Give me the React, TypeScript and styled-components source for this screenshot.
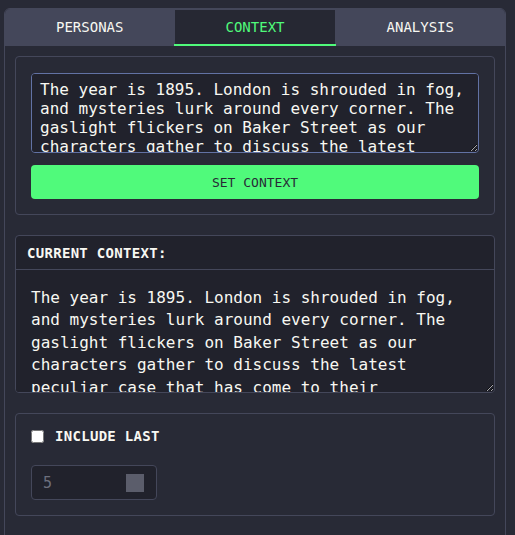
import React from 'react'
import styled, { createGlobalStyle } from 'styled-components'

const CONTEXT_TEXT =
  'The year is 1895. London is shrouded in fog, and mysteries lurk around every corner. The gaslight flickers on Baker Street as our characters gather to discuss the latest peculiar case that has come to their attention.'

const TABS = ['PERSONAS', 'CONTEXT', 'ANALYSIS']

const GlobalStyle = createGlobalStyle`
  html, body {
    margin: 0;
    background: #282a36;
    font-family: 'DejaVu Sans Mono', monospace;
    color: #f8f8f2;
  }
  * {
    box-sizing: border-box;
  }
`

const App: React.FC = () => {
  const [active, setActive] = React.useState('CONTEXT')
  const [draft, setDraft] = React.useState(CONTEXT_TEXT)
  const [context, setContext] = React.useState(CONTEXT_TEXT)
  const [includeLast, setIncludeLast] = React.useState(false)

  return (
    <>
      <GlobalStyle />
      <Page>
        <Panel>
          <TabBar>
            {TABS.map((tab) => (
              <Tab key={tab} $active={tab === active} onClick={() => setActive(tab)}>
                {tab}
              </Tab>
            ))}
          </TabBar>

          <Body>
            <Section>
              <ContextInput value={draft} onChange={(e) => setDraft(e.target.value)} />
              <SetButton onClick={() => setContext(draft)}>SET CONTEXT</SetButton>
            </Section>

            <CurrentBox>
              <CurrentHeader>CURRENT CONTEXT:</CurrentHeader>
              <CurrentText readOnly value={context} />
            </CurrentBox>

            <Section>
              <CheckRow>
                <Checkbox
                  type="checkbox"
                  checked={includeLast}
                  onChange={(e) => setIncludeLast(e.target.checked)}
                />
                <CheckLabel>INCLUDE LAST</CheckLabel>
              </CheckRow>
              <NumberBox>
                <NumberInput type="number" defaultValue={5} disabled={!includeLast} />
                <Spinner />
              </NumberBox>
            </Section>
          </Body>
        </Panel>
      </Page>
    </>
  )
}

export default App

const Page = styled.div`
  padding: 8px 0 0 4px;
`

const Panel = styled.div`
  width: 502px;
  min-height: 560px;
  border: 1px solid #44475a;
  border-radius: 6px;
  overflow: hidden;
  background: #282a36;
`

const TabBar = styled.div`
  display: flex;
  height: 37px;
`

const Tab = styled.button<{ $active: boolean }>`
  flex: 1 1 auto;
  padding: 0 20px;
  border: none;
  border-bottom: 2px solid ${(p) => (p.$active ? '#50fa7b' : 'transparent')};
  box-shadow: ${(p) => (p.$active ? 'inset 1px 1px 0 #44475a, inset -1px 0 0 #44475a' : 'none')};
  background: ${(p) => (p.$active ? '#262833' : '#44475a')};
  color: ${(p) => (p.$active ? '#50fa7b' : '#f8f8f2')};
  font-family: 'DejaVu Sans Mono', monospace;
  font-size: 14px;
  cursor: pointer;
`

const Body = styled.div`
  display: flex;
  flex-direction: column;
  gap: 20px;
  padding: 10px;
`

const Section = styled.div`
  display: flex;
  flex-direction: column;
  gap: 12px;
  padding: 16px 15px 15px;
  border: 1px solid #44475a;
  border-radius: 4px;
`

const ContextInput = styled.textarea`
  height: 80px;
  padding: 6px 8px;
  border: 1px solid #6272a4;
  border-radius: 4px;
  background: #21222c;
  color: #f8f8f2;
  font-family: 'DejaVu Sans Mono', monospace;
  font-size: 16px;
  line-height: 19px;
  resize: vertical;
  scrollbar-width: none;
  outline: none;
`

const SetButton = styled.button`
  height: 34px;
  border: none;
  border-radius: 4px;
  background: #50fa7b;
  color: #282a36;
  font-family: 'DejaVu Sans Mono', monospace;
  font-size: 13px;
  cursor: pointer;
`

const CurrentBox = styled.div`
  display: flex;
  flex-direction: column;
  border: 1px solid #44475a;
  border-radius: 4px;
  background: #21222c;
  overflow: hidden;
`

const CurrentHeader = styled.div`
  height: 34px;
  display: flex;
  align-items: center;
  padding: 0 11px;
  border-bottom: 1px solid #44475a;
  font-size: 14px;
  font-weight: bold;
  letter-spacing: 0.3px;
`

const CurrentText = styled.textarea`
  height: 122px;
  padding: 17px 15px 0;
  border: none;
  background: #21222c;
  color: #f8f8f2;
  font-family: 'DejaVu Sans Mono', monospace;
  font-size: 16px;
  line-height: 22.4px;
  resize: vertical;
  scrollbar-width: none;
  outline: none;
`

const CheckRow = styled.label`
  display: flex;
  align-items: center;
  gap: 11px;
  height: 14px;
  margin: -1px 0 10px;
`

const Checkbox = styled.input`
  width: 13px;
  height: 13px;
  margin: 0;
`

const CheckLabel = styled.span`
  font-size: 14px;
  font-weight: bold;
  letter-spacing: 0.3px;
`

const NumberBox = styled.div`
  width: 126px;
  height: 35px;
  display: flex;
  align-items: center;
  padding: 0 12px 0 11px;
  border: 1px solid #44475a;
  border-radius: 4px;
  background: #21222c;
`

const NumberInput = styled.input`
  flex: 1;
  min-width: 0;
  padding: 0;
  border: none;
  background: transparent;
  color: #6d6f7d;
  font-family: 'DejaVu Sans Mono', monospace;
  font-size: 15px;
  outline: none;
  -moz-appearance: textfield;

  &::-webkit-inner-spin-button,
  &::-webkit-outer-spin-button {
    -webkit-appearance: none;
    margin: 0;
  }
`

const Spinner = styled.span`
  width: 18px;
  height: 18px;
  background: #5b5d6b;
`
